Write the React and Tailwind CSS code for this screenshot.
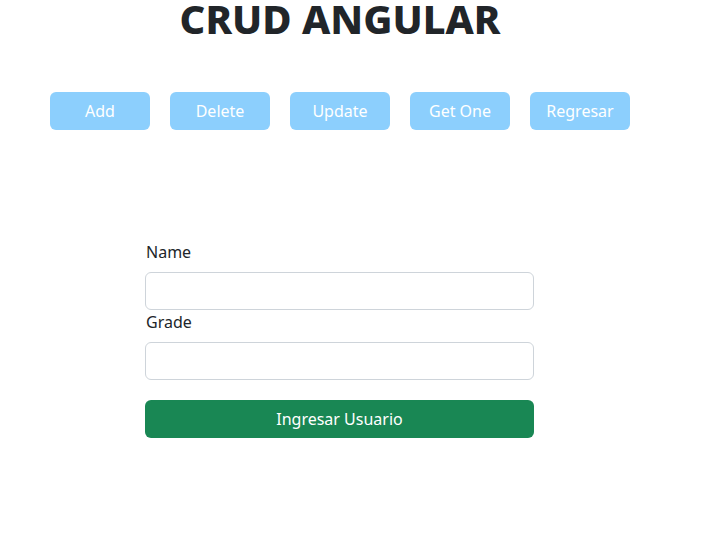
export default function App() {
  const buttons = ["Add", "Delete", "Update", "Get One", "Regresar"];

  return (
    <div className="min-h-screen bg-white text-[#212529]" style={{ fontFamily: '"Noto Sans", "Open Sans", sans-serif' }}>
      <div className="w-[680px]">
        <h1 className="text-center text-[40px] font-extrabold leading-[38px]">CRUD ANGULAR</h1>
        <div className="flex gap-5 pl-[50px] mt-[54px]">
          {buttons.map((b) => (
            <button
              key={b}
              className="w-[100px] h-[38px] rounded-md bg-[#8ccffd] text-white text-base"
            >
              {b}
            </button>
          ))}
        </div>
        <form className="ml-[145px] mt-[110px] w-[389px]">
          <label className="block text-base leading-6 pl-[1px]">Name</label>
          <input className="block mt-2 w-full h-[38px] rounded-md border border-[#ced4da]" />
          <label className="block text-base leading-6 pl-[1px]">Grade</label>
          <input className="block mt-2 w-full h-[38px] rounded-md border border-[#ced4da]" />
          <button
            type="button"
            className="block mt-5 w-full h-[38px] rounded-md bg-[#198754] text-white text-base"
          >
            Ingresar Usuario
          </button>
        </form>
      </div>
    </div>
  );
}
